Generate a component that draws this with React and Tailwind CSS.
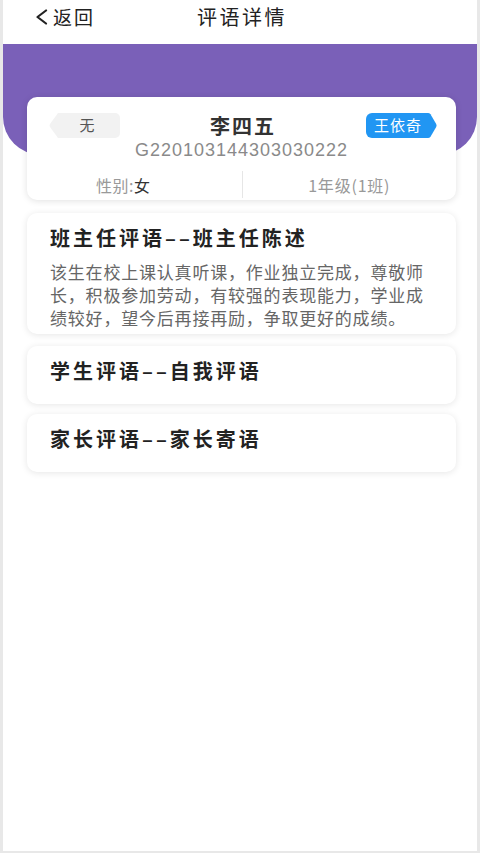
import React from 'react';

const comments = [
  {
    title: '班主任评语––班主任陈述',
    body: '该生在校上课认真听课，作业独立完成，尊敬师长，积极参加劳动，有较强的表现能力，学业成绩较好，望今后再接再励，争取更好的成绩。',
  },
  { title: '学生评语––自我评语', body: '' },
  { title: '家长评语––家长寄语', body: '' },
];

function BackIcon() {
  return (
    <svg width="13" height="16" viewBox="0 0 13 16" fill="none">
      <path d="M11 1.5 L2.5 8 L11 14.5" stroke="#222" strokeWidth="2.2" strokeLinecap="round" strokeLinejoin="round" />
    </svg>
  );
}

function LeftTag({ children }) {
  return (
    <div className="flex h-[25px] items-stretch">
      <svg width="9" height="25" viewBox="0 0 9 25">
        <path d="M9 0 L1 11 Q0 12.5 1 14 L9 25 Z" fill="#f2f2f2" />
      </svg>
      <div className="flex w-[62px] items-center justify-center rounded-r-[5px] bg-[#f2f2f2] pr-[4px] text-[15px] text-[#555]">
        {children}
      </div>
    </div>
  );
}

function RightTag({ children }) {
  return (
    <div className="flex h-[25px] items-stretch">
      <div className="flex w-[61px] items-center justify-center rounded-l-[6px] bg-[#2196f3] pl-[3px] text-[15px] tracking-[1px] text-white">
        {children}
      </div>
      <svg width="10" height="25" viewBox="0 0 10 25">
        <path d="M0 0 L1 0 Q2.5 0 3.5 1.3 L9.2 11 Q10 12.5 9.2 14 L3.5 23.7 Q2.5 25 1 25 L0 25 Z" fill="#2196f3" />
      </svg>
    </div>
  );
}

export default function App() {
  return (
    <div className="min-h-[853px] bg-[#e8e8e8] px-[3px] pb-[2px] font-['Noto_Sans_CJK_SC',sans-serif]">
      <div className="min-h-[851px] bg-white">
        {/* header */}
        <div className="grid h-[44px] grid-cols-[1fr_auto_1fr] items-start pt-[5px]">
          <div className="flex items-center gap-[5px] pl-[32px] leading-[24px]">
            <BackIcon />
            <span className="text-[19px] tracking-[2px] text-[#222]">返回</span>
          </div>
          <div className="pl-[4px] text-[20px] leading-[24px] tracking-[2.5px] text-[#222]">评语详情</div>
          <div />
        </div>

        {/* purple band */}
        <div className="h-[111px] rounded-b-[38px] bg-[#7a60b8]" />

        {/* student card */}
        <div className="relative ml-[24px] mr-[21px] -mt-[58px] rounded-[10px] bg-white pt-[16px] shadow-[0_1px_7px_rgba(0,0,0,0.12)]">
          <div className="grid h-[25px] grid-cols-[1fr_auto_1fr] items-center pl-[22px] pr-[19px]">
            <div className="flex justify-start">
              <LeftTag>无</LeftTag>
            </div>
            <div className="text-[20px] font-bold leading-[25px] tracking-[2px] text-[#333]">李四五</div>
            <div className="flex justify-end">
              <RightTag>王依奇</RightTag>
            </div>
          </div>
          <div className="mt-[1px] text-center font-['Liberation_Sans',sans-serif] text-[18px] leading-[22px] tracking-[1px] text-[#8a8a8a]">
            G220103144303030222
          </div>
          <div className="mt-[10px] grid h-[27px] grid-cols-2">
            <div className="flex items-center justify-center pr-[22px] text-[16px] tracking-[0.5px] text-[#999]">
              性别:<span className="text-[#333]">女</span>
            </div>
            <div className="flex items-center justify-center border-l border-[#e6e6e6] text-[16px] tracking-[0.8px] text-[#999]">
              1年级(1班)
            </div>
          </div>
          <div className="h-[2px]" />
        </div>

        {/* comments */}
        <div className="ml-[24px] mr-[21px] mt-[13px] flex flex-col">
          {comments.map((c, i) => (
            <div
              key={c.title}
              className={
                'rounded-[10px] bg-white pl-[23px] pr-[18px] pt-[13px] shadow-[0_1px_7px_rgba(0,0,0,0.1)] ' +
                (c.body ? 'pb-[5px]' : 'pb-[21px]') +
                (i === 1 ? ' mt-[12px]' : i === 2 ? ' mt-[10px]' : '')
              }
            >
              <div className="text-[20px] font-bold leading-[24px] tracking-[3px] text-[#222]">{c.title}</div>
              {c.body && (
                <p className="mt-[10px] text-[17px] leading-[23px] tracking-[0.8px] text-[#666]">{c.body}</p>
              )}
            </div>
          ))}
        </div>
      </div>
    </div>
  );
}
